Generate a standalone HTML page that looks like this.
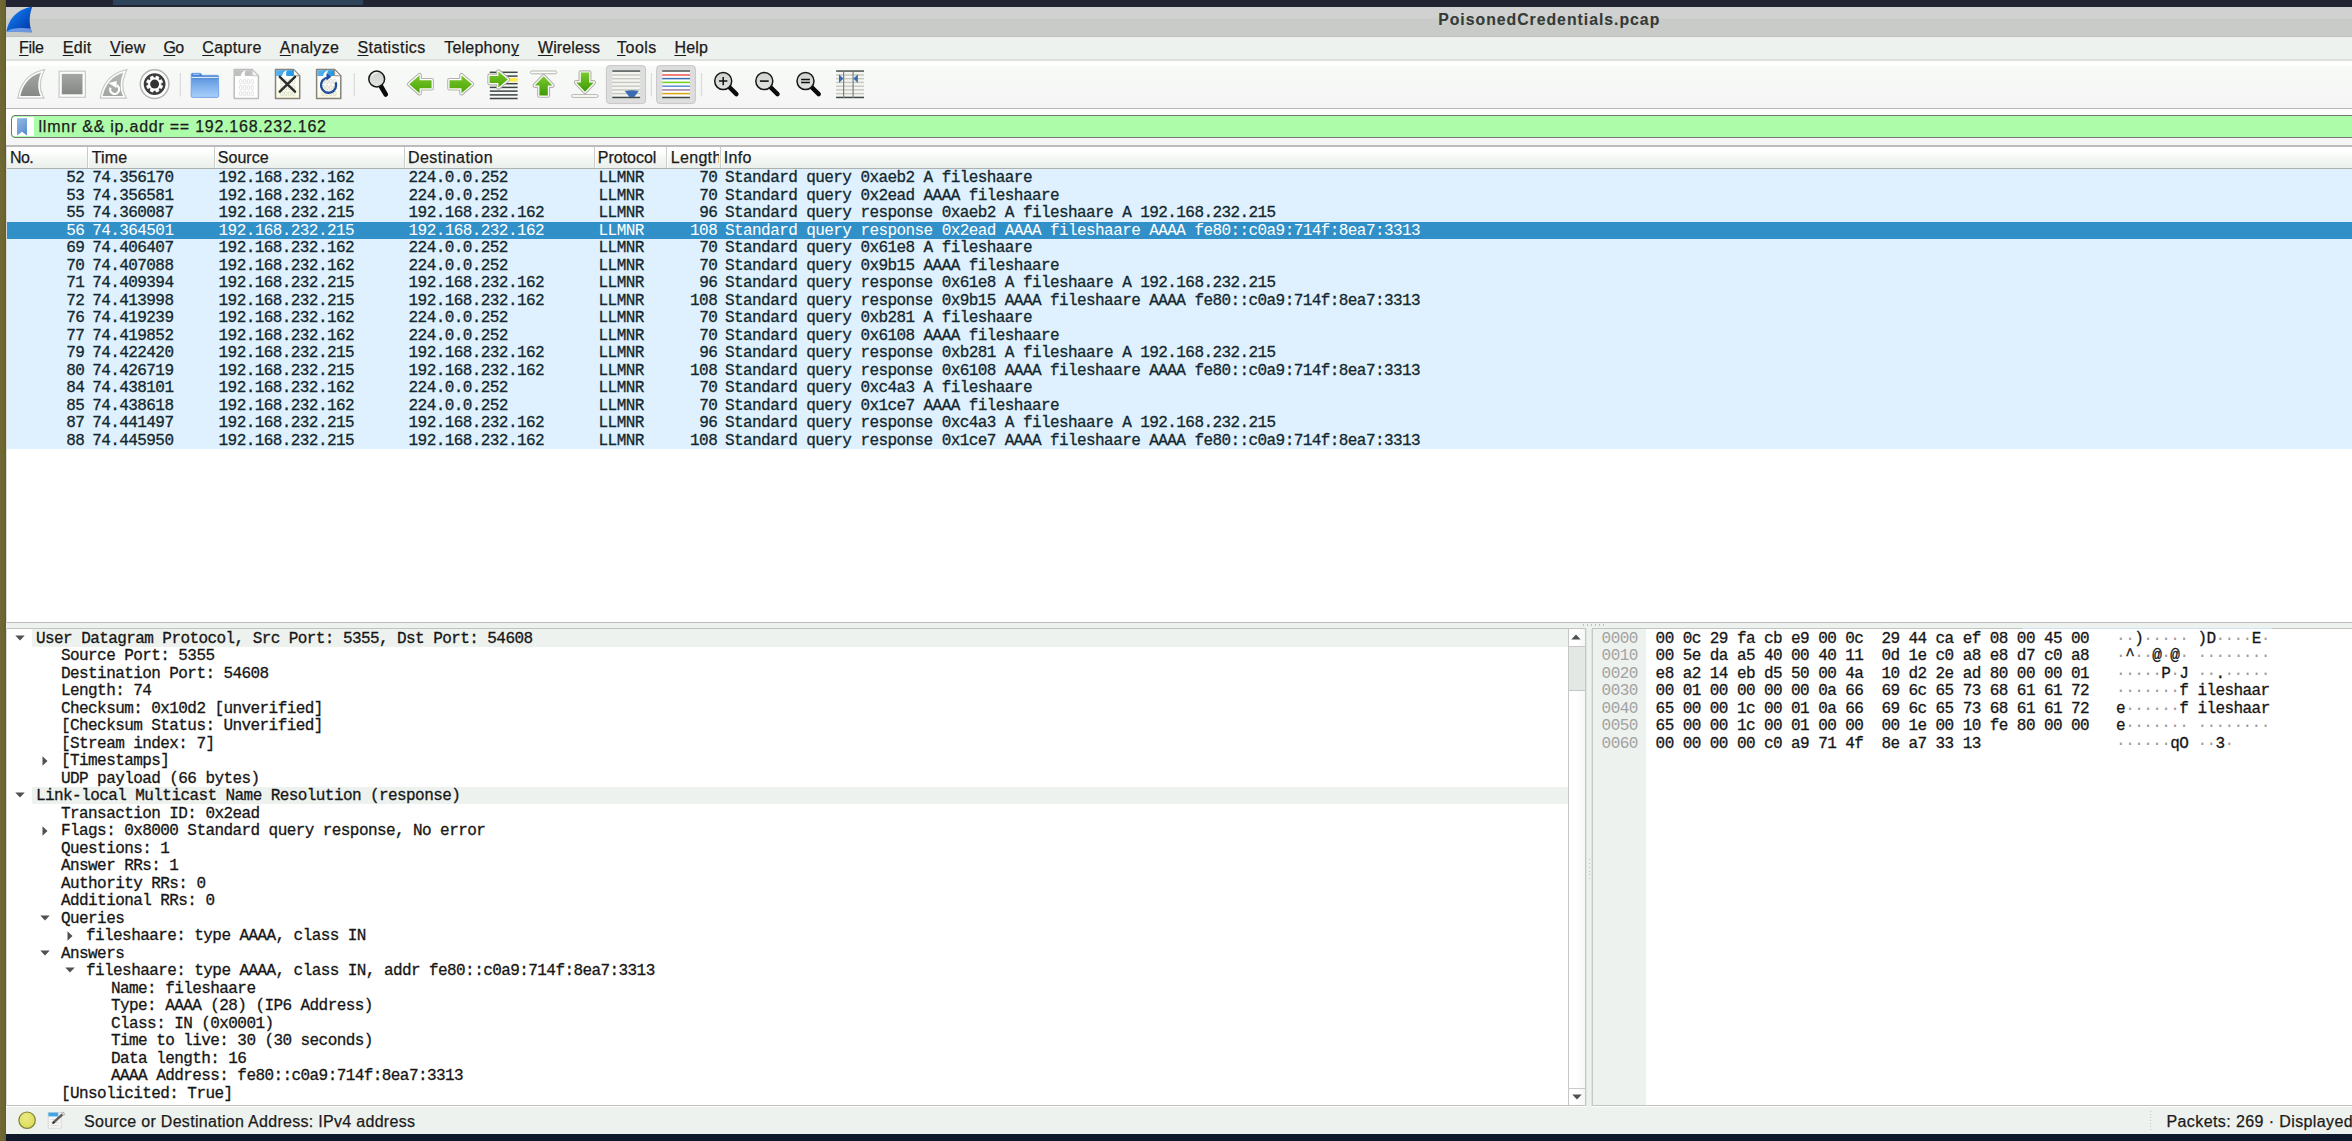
<!DOCTYPE html>
<html><head><meta charset="utf-8"><title>Wireshark</title>
<style>
html,body{margin:0;padding:0;overflow:hidden;}
html{width:2352px;height:1141px;}
body{width:2352px;height:1141px;overflow:hidden;position:relative;background:#fff;font-family:"Liberation Sans", sans-serif;}
.a{position:absolute;}
.s{position:absolute;white-space:pre;font-family:"Liberation Sans", sans-serif;font-size:16px;color:#1b1b1b;line-height:18px;height:18px;-webkit-text-stroke:0.25px currentColor;}
.s u{text-decoration:underline;text-decoration-thickness:1px;text-underline-offset:2px;}
.m{position:absolute;white-space:pre;font-family:"Liberation Mono", monospace;font-size:16px;letter-spacing:-0.575px;color:#12272e;line-height:18px;height:18px;-webkit-text-stroke:0.3px currentColor;}
.r{position:absolute;left:7px;right:0;height:17.5px;background:#dff1fe;}
.sel{background:#3190c7;}
.sel .m{color:#fff;-webkit-text-stroke:0.05px #fff;}
.hx2{letter-spacing:-0.57px;}
.t{color:#161616;}
.hx{color:#161616;}
.off{color:#a2a2a2;-webkit-text-stroke:0;}
.hx i{font-style:normal;color:#9c9c9c;-webkit-text-stroke:0;}
</style></head><body>

<div class="a" style="left:0;top:0;width:6px;height:1141px;background:linear-gradient(90deg,#716934 0,#6d6531 70%,#62592a 100%);"></div>
<div class="a" style="left:6px;top:0;right:0;height:6.5px;background:#222531;"></div>
<div class="a" style="left:113px;top:0;width:250px;height:5px;background:#2c435a;"></div>
<div class="a" style="left:6px;top:6.5px;right:0;height:30px;background:linear-gradient(180deg,#d1d1d1 0,#d1d1d1 38%,#c8cbc7 39%,#c8cbc7 100%);"></div>
<div class="a" style="left:6px;top:35.5px;right:0;height:1px;background:#bdc0bc;"></div>
<div class="a" style="left:6px;top:36.5px;right:0;height:23px;background:#eef2ee;"></div>
<div class="a" style="left:6px;top:59px;right:0;height:1.5px;background:#dde0dd;"></div>
<div class="a" style="left:6px;top:60.5px;right:0;height:48px;background:linear-gradient(180deg,#fff 0,#fff 9%,#f7faf7 11%,#f5f5f5 100%);"></div>
<div class="a" style="left:6px;top:108px;right:0;height:1px;background:#b7bab7;"></div>
<div class="a" style="left:6px;top:109px;right:0;height:36px;background:linear-gradient(180deg,#fff 0,#fff 15%,#f5f5f5 80%);"></div>
<div class="a" style="left:6px;top:144.5px;right:0;height:2px;background:#bcbcbc;"></div>
<div class="a" style="left:11px;top:115.2px;right:-6px;height:22.6px;box-sizing:border-box;border:1.4px solid #747474;border-radius:4px;background:#adfcaa;"></div>
<div class="a" style="left:12.4px;top:116.6px;width:21.9px;height:19.8px;border-radius:3px 0 0 3px;background:#fff;"></div>
<svg class="a" style="left:16px;top:117px" width="12" height="20" viewBox="0 0 12 20"><defs><linearGradient id="gbm" x1="0" y1="0" x2="0.6" y2="1"><stop offset="0" stop-color="#93b8e4"/><stop offset="1" stop-color="#5f92d2"/></linearGradient></defs><path d="M1 1.2h10v17.3l-5-3.8L1 18.5z" fill="url(#gbm)"/></svg>
<div class="a" style="left:7px;top:146.5px;right:0;height:21.5px;background:linear-gradient(180deg,#fff 0,#fff 20%,#f5f8f5 50%,#ecf0ec 100%);"></div>
<div class="a" style="left:7px;top:168px;right:0;height:1px;background:#aeb0ae;"></div>
<div class="a" style="left:86.8px;top:147px;width:1px;height:21px;background:#c9ccc9;"></div>
<div class="a" style="left:87.8px;top:147px;width:1px;height:21px;background:#fff;"></div>
<div class="a" style="left:213.5px;top:147px;width:1px;height:21px;background:#c9ccc9;"></div>
<div class="a" style="left:214.5px;top:147px;width:1px;height:21px;background:#fff;"></div>
<div class="a" style="left:404.1px;top:147px;width:1px;height:21px;background:#c9ccc9;"></div>
<div class="a" style="left:405.1px;top:147px;width:1px;height:21px;background:#fff;"></div>
<div class="a" style="left:594.2px;top:147px;width:1px;height:21px;background:#c9ccc9;"></div>
<div class="a" style="left:595.2px;top:147px;width:1px;height:21px;background:#fff;"></div>
<div class="a" style="left:666.1px;top:147px;width:1px;height:21px;background:#c9ccc9;"></div>
<div class="a" style="left:667.1px;top:147px;width:1px;height:21px;background:#fff;"></div>
<div class="a" style="left:719.7px;top:147px;width:1px;height:21px;background:#c9ccc9;"></div>
<div class="a" style="left:720.7px;top:147px;width:1px;height:21px;background:#fff;"></div>
<div class="r" style="top:169.3px">
<span class="m" style="left:59.2px;top:-0.1px">52</span><span class="m" style="left:85.2px;top:-0.1px">74.356170</span><span class="m" style="left:211.6px;top:-0.1px">192.168.232.162</span><span class="m" style="left:401.6px;top:-0.1px">224.0.0.252</span><span class="m" style="left:591.6px;top:-0.1px">LLMNR</span><span class="m" style="left:692.2px;top:-0.1px">70</span><span class="m" style="left:718.0px;top:-0.1px">Standard query 0xaeb2 A fileshaare</span>
</div>
<div class="r" style="top:186.8px">
<span class="m" style="left:59.2px;top:-0.1px">53</span><span class="m" style="left:85.2px;top:-0.1px">74.356581</span><span class="m" style="left:211.6px;top:-0.1px">192.168.232.162</span><span class="m" style="left:401.6px;top:-0.1px">224.0.0.252</span><span class="m" style="left:591.6px;top:-0.1px">LLMNR</span><span class="m" style="left:692.2px;top:-0.1px">70</span><span class="m" style="left:718.0px;top:-0.1px">Standard query 0x2ead AAAA fileshaare</span>
</div>
<div class="r" style="top:204.3px">
<span class="m" style="left:59.2px;top:-0.1px">55</span><span class="m" style="left:85.2px;top:-0.1px">74.360087</span><span class="m" style="left:211.6px;top:-0.1px">192.168.232.215</span><span class="m" style="left:401.6px;top:-0.1px">192.168.232.162</span><span class="m" style="left:591.6px;top:-0.1px">LLMNR</span><span class="m" style="left:692.2px;top:-0.1px">96</span><span class="m" style="left:718.0px;top:-0.1px">Standard query response 0xaeb2 A fileshaare A 192.168.232.215</span>
</div>
<div class="r sel" style="top:221.8px">
<span class="m" style="left:59.2px;top:-0.1px">56</span><span class="m" style="left:85.2px;top:-0.1px">74.364501</span><span class="m" style="left:211.6px;top:-0.1px">192.168.232.215</span><span class="m" style="left:401.6px;top:-0.1px">192.168.232.162</span><span class="m" style="left:591.6px;top:-0.1px">LLMNR</span><span class="m" style="left:683.1px;top:-0.1px">108</span><span class="m" style="left:718.0px;top:-0.1px">Standard query response 0x2ead AAAA fileshaare AAAA fe80::c0a9:714f:8ea7:3313</span>
</div>
<div class="r" style="top:239.3px">
<span class="m" style="left:59.2px;top:-0.1px">69</span><span class="m" style="left:85.2px;top:-0.1px">74.406407</span><span class="m" style="left:211.6px;top:-0.1px">192.168.232.162</span><span class="m" style="left:401.6px;top:-0.1px">224.0.0.252</span><span class="m" style="left:591.6px;top:-0.1px">LLMNR</span><span class="m" style="left:692.2px;top:-0.1px">70</span><span class="m" style="left:718.0px;top:-0.1px">Standard query 0x61e8 A fileshaare</span>
</div>
<div class="r" style="top:256.8px">
<span class="m" style="left:59.2px;top:-0.1px">70</span><span class="m" style="left:85.2px;top:-0.1px">74.407088</span><span class="m" style="left:211.6px;top:-0.1px">192.168.232.162</span><span class="m" style="left:401.6px;top:-0.1px">224.0.0.252</span><span class="m" style="left:591.6px;top:-0.1px">LLMNR</span><span class="m" style="left:692.2px;top:-0.1px">70</span><span class="m" style="left:718.0px;top:-0.1px">Standard query 0x9b15 AAAA fileshaare</span>
</div>
<div class="r" style="top:274.3px">
<span class="m" style="left:59.2px;top:-0.1px">71</span><span class="m" style="left:85.2px;top:-0.1px">74.409394</span><span class="m" style="left:211.6px;top:-0.1px">192.168.232.215</span><span class="m" style="left:401.6px;top:-0.1px">192.168.232.162</span><span class="m" style="left:591.6px;top:-0.1px">LLMNR</span><span class="m" style="left:692.2px;top:-0.1px">96</span><span class="m" style="left:718.0px;top:-0.1px">Standard query response 0x61e8 A fileshaare A 192.168.232.215</span>
</div>
<div class="r" style="top:291.8px">
<span class="m" style="left:59.2px;top:-0.1px">72</span><span class="m" style="left:85.2px;top:-0.1px">74.413998</span><span class="m" style="left:211.6px;top:-0.1px">192.168.232.215</span><span class="m" style="left:401.6px;top:-0.1px">192.168.232.162</span><span class="m" style="left:591.6px;top:-0.1px">LLMNR</span><span class="m" style="left:683.1px;top:-0.1px">108</span><span class="m" style="left:718.0px;top:-0.1px">Standard query response 0x9b15 AAAA fileshaare AAAA fe80::c0a9:714f:8ea7:3313</span>
</div>
<div class="r" style="top:309.3px">
<span class="m" style="left:59.2px;top:-0.1px">76</span><span class="m" style="left:85.2px;top:-0.1px">74.419239</span><span class="m" style="left:211.6px;top:-0.1px">192.168.232.162</span><span class="m" style="left:401.6px;top:-0.1px">224.0.0.252</span><span class="m" style="left:591.6px;top:-0.1px">LLMNR</span><span class="m" style="left:692.2px;top:-0.1px">70</span><span class="m" style="left:718.0px;top:-0.1px">Standard query 0xb281 A fileshaare</span>
</div>
<div class="r" style="top:326.8px">
<span class="m" style="left:59.2px;top:-0.1px">77</span><span class="m" style="left:85.2px;top:-0.1px">74.419852</span><span class="m" style="left:211.6px;top:-0.1px">192.168.232.162</span><span class="m" style="left:401.6px;top:-0.1px">224.0.0.252</span><span class="m" style="left:591.6px;top:-0.1px">LLMNR</span><span class="m" style="left:692.2px;top:-0.1px">70</span><span class="m" style="left:718.0px;top:-0.1px">Standard query 0x6108 AAAA fileshaare</span>
</div>
<div class="r" style="top:344.3px">
<span class="m" style="left:59.2px;top:-0.1px">79</span><span class="m" style="left:85.2px;top:-0.1px">74.422420</span><span class="m" style="left:211.6px;top:-0.1px">192.168.232.215</span><span class="m" style="left:401.6px;top:-0.1px">192.168.232.162</span><span class="m" style="left:591.6px;top:-0.1px">LLMNR</span><span class="m" style="left:692.2px;top:-0.1px">96</span><span class="m" style="left:718.0px;top:-0.1px">Standard query response 0xb281 A fileshaare A 192.168.232.215</span>
</div>
<div class="r" style="top:361.8px">
<span class="m" style="left:59.2px;top:-0.1px">80</span><span class="m" style="left:85.2px;top:-0.1px">74.426719</span><span class="m" style="left:211.6px;top:-0.1px">192.168.232.215</span><span class="m" style="left:401.6px;top:-0.1px">192.168.232.162</span><span class="m" style="left:591.6px;top:-0.1px">LLMNR</span><span class="m" style="left:683.1px;top:-0.1px">108</span><span class="m" style="left:718.0px;top:-0.1px">Standard query response 0x6108 AAAA fileshaare AAAA fe80::c0a9:714f:8ea7:3313</span>
</div>
<div class="r" style="top:379.3px">
<span class="m" style="left:59.2px;top:-0.1px">84</span><span class="m" style="left:85.2px;top:-0.1px">74.438101</span><span class="m" style="left:211.6px;top:-0.1px">192.168.232.162</span><span class="m" style="left:401.6px;top:-0.1px">224.0.0.252</span><span class="m" style="left:591.6px;top:-0.1px">LLMNR</span><span class="m" style="left:692.2px;top:-0.1px">70</span><span class="m" style="left:718.0px;top:-0.1px">Standard query 0xc4a3 A fileshaare</span>
</div>
<div class="r" style="top:396.8px">
<span class="m" style="left:59.2px;top:-0.1px">85</span><span class="m" style="left:85.2px;top:-0.1px">74.438618</span><span class="m" style="left:211.6px;top:-0.1px">192.168.232.162</span><span class="m" style="left:401.6px;top:-0.1px">224.0.0.252</span><span class="m" style="left:591.6px;top:-0.1px">LLMNR</span><span class="m" style="left:692.2px;top:-0.1px">70</span><span class="m" style="left:718.0px;top:-0.1px">Standard query 0x1ce7 AAAA fileshaare</span>
</div>
<div class="r" style="top:414.3px">
<span class="m" style="left:59.2px;top:-0.1px">87</span><span class="m" style="left:85.2px;top:-0.1px">74.441497</span><span class="m" style="left:211.6px;top:-0.1px">192.168.232.215</span><span class="m" style="left:401.6px;top:-0.1px">192.168.232.162</span><span class="m" style="left:591.6px;top:-0.1px">LLMNR</span><span class="m" style="left:692.2px;top:-0.1px">96</span><span class="m" style="left:718.0px;top:-0.1px">Standard query response 0xc4a3 A fileshaare A 192.168.232.215</span>
</div>
<div class="r" style="top:431.8px">
<span class="m" style="left:59.2px;top:-0.1px">88</span><span class="m" style="left:85.2px;top:-0.1px">74.445950</span><span class="m" style="left:211.6px;top:-0.1px">192.168.232.215</span><span class="m" style="left:401.6px;top:-0.1px">192.168.232.162</span><span class="m" style="left:591.6px;top:-0.1px">LLMNR</span><span class="m" style="left:683.1px;top:-0.1px">108</span><span class="m" style="left:718.0px;top:-0.1px">Standard query response 0x1ce7 AAAA fileshaare AAAA fe80::c0a9:714f:8ea7:3313</span>
</div>
<div class="a" style="left:7px;top:622px;right:0;height:1px;background:#b9bcb9;"></div>
<div class="a" style="left:6px;top:623px;right:0;height:5.5px;background:#eef2ee;"></div>
<div class="a" style="left:7px;top:628px;width:1579px;height:478px;box-sizing:border-box;border:1px solid #c1c3c1;border-left:none;background:#fff;"></div>
<div class="a" style="left:1586px;top:628.5px;width:6px;height:478px;background:#eef2ee;"></div>
<div class="a" style="left:1592px;top:628px;right:-2px;height:478px;box-sizing:border-box;border:1px solid #c1c3c1;background:#fff;"></div>
<div class="a" style="left:1593px;top:629px;width:53px;height:476px;background:#eef2ee;"></div>
<div class="a" style="left:2022px;top:627.5px;width:250px;height:1px;background:#cfe2f2;"></div>
<div class="a" style="left:6px;top:147px;width:1px;height:476px;background:#d8dbd8;"></div>
<div class="a" style="left:6px;top:628px;width:1px;height:478px;background:#d8dbd8;"></div>
<div class="a" style="left:1589px;top:859.2px;width:1.2px;height:1.2px;background:#bcbfbc;"></div>
<div class="a" style="left:1589px;top:863.0px;width:1.2px;height:1.2px;background:#bcbfbc;"></div>
<div class="a" style="left:1589px;top:866.7px;width:1.2px;height:1.2px;background:#bcbfbc;"></div>
<div class="a" style="left:1589px;top:870.5px;width:1.2px;height:1.2px;background:#bcbfbc;"></div>
<div class="a" style="left:1589px;top:874.2px;width:1.2px;height:1.2px;background:#bcbfbc;"></div>
<div class="a" style="left:1589px;top:878.0px;width:1.2px;height:1.2px;background:#bcbfbc;"></div>
<div class="a" style="left:1585px;top:629px;width:2px;height:477px;background:linear-gradient(90deg,#c6c8c6 0,#c6c8c6 50%,#dfe2df 50%,#dfe2df 100%);"></div>
<div class="a" style="left:1591px;top:629px;width:2px;height:477px;background:linear-gradient(90deg,#dfe2df 0,#dfe2df 50%,#c6c8c6 50%,#c6c8c6 100%);"></div>
<div class="a" style="left:1583.0px;top:624.4px;width:1.2px;height:1.2px;background:#bcbfbc;"></div>
<div class="a" style="left:1586.9px;top:624.4px;width:1.2px;height:1.2px;background:#bcbfbc;"></div>
<div class="a" style="left:1590.8px;top:624.4px;width:1.2px;height:1.2px;background:#bcbfbc;"></div>
<div class="a" style="left:1594.7px;top:624.4px;width:1.2px;height:1.2px;background:#bcbfbc;"></div>
<div class="a" style="left:1598.6px;top:624.4px;width:1.2px;height:1.2px;background:#bcbfbc;"></div>
<div class="a" style="left:1602.5px;top:624.4px;width:1.2px;height:1.2px;background:#bcbfbc;"></div>
<div class="a" style="left:6px;top:1106.5px;right:0;height:27.5px;background:#eef2ee;"></div>
<div class="a" style="left:6px;top:1134px;right:0;height:7px;background:#10182b;"></div>
<div class="a" style="left:32.3px;top:629.3px;width:1536.2px;height:17.5px;background:#eef2ee;"></div>
<svg class="a" style="left:14.7px;top:634.9px" width="10" height="6" viewBox="0 0 10 6"><path d="M0.3 0.5h9.4L5 5.5z" fill="#4d524f"/></svg>
<span class="m t" style="left:36.0px;top:629.9px">User Datagram Protocol, Src Port: 5355, Dst Port: 54608</span>
<span class="m t" style="left:61.0px;top:647.4px">Source Port: 5355</span>
<span class="m t" style="left:61.0px;top:664.9px">Destination Port: 54608</span>
<span class="m t" style="left:61.0px;top:682.4px">Length: 74</span>
<span class="m t" style="left:61.0px;top:699.9px">Checksum: 0x10d2 [unverified]</span>
<span class="m t" style="left:61.0px;top:717.4px">[Checksum Status: Unverified]</span>
<span class="m t" style="left:61.0px;top:734.9px">[Stream index: 7]</span>
<svg class="a" style="left:42.1px;top:755.8px" width="6" height="10" viewBox="0 0 6 10"><path d="M0.5 0.3v9.4L5.5 5z" fill="#4d524f"/></svg>
<span class="m t" style="left:61.0px;top:752.4px">[Timestamps]</span>
<span class="m t" style="left:61.0px;top:769.9px">UDP payload (66 bytes)</span>
<div class="a" style="left:32.3px;top:786.8px;width:1536.2px;height:17.5px;background:#eef2ee;"></div>
<svg class="a" style="left:14.7px;top:792.4px" width="10" height="6" viewBox="0 0 10 6"><path d="M0.3 0.5h9.4L5 5.5z" fill="#4d524f"/></svg>
<span class="m t" style="left:36.0px;top:787.4px">Link-local Multicast Name Resolution (response)</span>
<span class="m t" style="left:61.0px;top:804.9px">Transaction ID: 0x2ead</span>
<svg class="a" style="left:42.1px;top:825.8px" width="6" height="10" viewBox="0 0 6 10"><path d="M0.5 0.3v9.4L5.5 5z" fill="#4d524f"/></svg>
<span class="m t" style="left:61.0px;top:822.4px">Flags: 0x8000 Standard query response, No error</span>
<span class="m t" style="left:61.0px;top:839.9px">Questions: 1</span>
<span class="m t" style="left:61.0px;top:857.4px">Answer RRs: 1</span>
<span class="m t" style="left:61.0px;top:874.9px">Authority RRs: 0</span>
<span class="m t" style="left:61.0px;top:892.4px">Additional RRs: 0</span>
<svg class="a" style="left:39.7px;top:914.9px" width="10" height="6" viewBox="0 0 10 6"><path d="M0.3 0.5h9.4L5 5.5z" fill="#4d524f"/></svg>
<span class="m t" style="left:61.0px;top:909.9px">Queries</span>
<svg class="a" style="left:67.1px;top:930.8px" width="6" height="10" viewBox="0 0 6 10"><path d="M0.5 0.3v9.4L5.5 5z" fill="#4d524f"/></svg>
<span class="m t" style="left:86.0px;top:927.4px">fileshaare: type AAAA, class IN</span>
<svg class="a" style="left:39.7px;top:949.9px" width="10" height="6" viewBox="0 0 10 6"><path d="M0.3 0.5h9.4L5 5.5z" fill="#4d524f"/></svg>
<span class="m t" style="left:61.0px;top:944.9px">Answers</span>
<svg class="a" style="left:64.7px;top:967.4px" width="10" height="6" viewBox="0 0 10 6"><path d="M0.3 0.5h9.4L5 5.5z" fill="#4d524f"/></svg>
<span class="m t" style="left:86.0px;top:962.4px">fileshaare: type AAAA, class IN, addr fe80::c0a9:714f:8ea7:3313</span>
<span class="m t" style="left:111.0px;top:979.9px">Name: fileshaare</span>
<span class="m t" style="left:111.0px;top:997.4px">Type: AAAA (28) (IP6 Address)</span>
<span class="m t" style="left:111.0px;top:1014.9px">Class: IN (0x0001)</span>
<span class="m t" style="left:111.0px;top:1032.4px">Time to live: 30 (30 seconds)</span>
<span class="m t" style="left:111.0px;top:1049.9px">Data length: 16</span>
<span class="m t" style="left:111.0px;top:1067.4px">AAAA Address: fe80::c0a9:714f:8ea7:3313</span>
<span class="m t" style="left:61.0px;top:1084.9px">[Unsolicited: True]</span>
<div class="a" style="left:1568px;top:629px;width:1px;height:476px;background:#c4c7c4;"></div>
<div class="a" style="left:1569px;top:629px;width:16px;height:476px;background:linear-gradient(90deg,#fff 0,#fff 40%,#f5f6f5 100%);"></div>
<div class="a" style="left:1569px;top:646px;width:16px;height:45px;background:#e4e8e4;border-top:1px solid #c5c8c5;border-bottom:1px solid #c5c8c5;box-sizing:border-box;"></div>
<div class="a" style="left:1569px;top:1088px;width:16px;height:1px;background:#c9cbc9;"></div>
<svg class="a" style="left:1571.4px;top:633.6px" width="10" height="6" viewBox="0 0 10 6"><path d="M0.3 5.5h9.4L5 0.5z" fill="#4d524f"/></svg>
<svg class="a" style="left:1571.5px;top:1093.6px" width="10" height="6" viewBox="0 0 10 6"><path d="M0.3 0.5h9.4L5 5.5z" fill="#4d524f"/></svg>
<span class="m hx2 off" style="left:1601.6px;top:629.9px">0000</span>
<span class="m hx2 hx" style="left:1655.6px;top:629.9px">00 0c 29 fa cb e9 00 0c  29 44 ca ef 08 00 45 00</span>
<span class="m hx2 hx" style="left:2116.1px;top:629.9px"><i>··</i>)<i>·····</i> )D<i>····</i>E<i>·</i></span>
<span class="m hx2 off" style="left:1601.6px;top:647.4px">0010</span>
<span class="m hx2 hx" style="left:1655.6px;top:647.4px">00 5e da a5 40 00 40 11  0d 1e c0 a8 e8 d7 c0 a8</span>
<span class="m hx2 hx" style="left:2116.1px;top:647.4px"><i>·</i>^<i>··</i>@<i>·</i>@<i>·</i> <i>········</i></span>
<span class="m hx2 off" style="left:1601.6px;top:664.9px">0020</span>
<span class="m hx2 hx" style="left:1655.6px;top:664.9px">e8 a2 14 eb d5 50 00 4a  10 d2 2e ad 80 00 00 01</span>
<span class="m hx2 hx" style="left:2116.1px;top:664.9px"><i>·····</i>P<i>·</i>J <i>··</i>.<i>·····</i></span>
<span class="m hx2 off" style="left:1601.6px;top:682.4px">0030</span>
<span class="m hx2 hx" style="left:1655.6px;top:682.4px">00 01 00 00 00 00 0a 66  69 6c 65 73 68 61 61 72</span>
<span class="m hx2 hx" style="left:2116.1px;top:682.4px"><i>·······</i>f ileshaar</span>
<span class="m hx2 off" style="left:1601.6px;top:699.9px">0040</span>
<span class="m hx2 hx" style="left:1655.6px;top:699.9px">65 00 00 1c 00 01 0a 66  69 6c 65 73 68 61 61 72</span>
<span class="m hx2 hx" style="left:2116.1px;top:699.9px">e<i>······</i>f ileshaar</span>
<span class="m hx2 off" style="left:1601.6px;top:717.4px">0050</span>
<span class="m hx2 hx" style="left:1655.6px;top:717.4px">65 00 00 1c 00 01 00 00  00 1e 00 10 fe 80 00 00</span>
<span class="m hx2 hx" style="left:2116.1px;top:717.4px">e<i>·······</i> <i>········</i></span>
<span class="m hx2 off" style="left:1601.6px;top:734.9px">0060</span>
<span class="m hx2 hx" style="left:1655.6px;top:734.9px">00 00 00 00 c0 a9 71 4f  8e a7 33 13</span>
<span class="m hx2 hx" style="left:2116.1px;top:734.9px"><i>······</i>qO <i>··</i>3<i>·</i></span>
<span class="s" style="left:1438.2px;top:11.2px;letter-spacing:0.987px;font-weight:bold;color:#343a37;font-size:15.8px;-webkit-text-stroke:0.1px #343a37;">PoisonedCredentials.pcap</span>
<span class="s" style="left:19.1px;top:38.9px;letter-spacing:-0.332px;"><u>F</u>ile</span>
<span class="s" style="left:62.7px;top:38.9px;letter-spacing:0.341px;"><u>E</u>dit</span>
<span class="s" style="left:109.9px;top:38.9px;letter-spacing:0.365px;"><u>V</u>iew</span>
<span class="s" style="left:163.5px;top:38.9px;letter-spacing:-0.659px;"><u>G</u>o</span>
<span class="s" style="left:202.3px;top:38.9px;letter-spacing:0.360px;"><u>C</u>apture</span>
<span class="s" style="left:279.8px;top:38.9px;letter-spacing:0.380px;"><u>A</u>nalyze</span>
<span class="s" style="left:357.4px;top:38.9px;letter-spacing:0.432px;"><u>S</u>tatistics</span>
<span class="s" style="left:444.2px;top:38.9px;letter-spacing:0.231px;">Telephon<u>y</u></span>
<span class="s" style="left:537.9px;top:38.9px;letter-spacing:0.122px;"><u>W</u>ireless</span>
<span class="s" style="left:617.0px;top:38.9px;letter-spacing:0.485px;"><u>T</u>ools</span>
<span class="s" style="left:674.4px;top:38.9px;letter-spacing:0.226px;"><u>H</u>elp</span>
<span class="s" style="left:38.5px;top:117.9px;letter-spacing:0.764px;">llmnr &amp;&amp; ip.addr == 192.168.232.162</span>
<span class="s" style="left:10.0px;top:149.1px;letter-spacing:-0.653px;">No.</span>
<span class="s" style="left:91.8px;top:149.1px;letter-spacing:0.110px;">Time</span>
<span class="s" style="left:217.8px;top:149.1px;letter-spacing:0.019px;">Source</span>
<span class="s" style="left:407.9px;top:149.1px;letter-spacing:0.465px;">Destination</span>
<span class="s" style="left:597.8px;top:149.1px;letter-spacing:-0.015px;">Protocol</span>
<span class="s" style="left:670.7px;top:149.1px;letter-spacing:0.332px;width:48.3px;overflow:hidden;">Length</span>
<span class="s" style="left:723.8px;top:149.1px;letter-spacing:0.271px;">Info</span>
<span class="s" style="left:84.0px;top:1113.1px;letter-spacing:0.300px;">Source or Destination Address: IPv4 address</span>
<span class="s" style="left:2166.5px;top:1113.1px;letter-spacing:0.401px;">Packets: 269 · Displayed: 16</span>
<svg class="a" style="left:0;top:0" width="900" height="112" viewBox="0 0 900 112">
<defs>
<linearGradient id="gfin" x1="0" y1="0" x2="1" y2="1"><stop offset="0" stop-color="#2b8df7"/><stop offset="0.45" stop-color="#0a62d6"/><stop offset="1" stop-color="#002f9e"/></linearGradient>
<linearGradient id="ggrey" x1="0" y1="0" x2="0" y2="1"><stop offset="0" stop-color="#a3a6a3"/><stop offset="1" stop-color="#858885"/></linearGradient>
<linearGradient id="ggrey2" x1="0" y1="0" x2="0" y2="1"><stop offset="0" stop-color="#b4b7b4"/><stop offset="1" stop-color="#a2a5a2"/></linearGradient>
<linearGradient id="gfold" x1="0" y1="0" x2="0" y2="1"><stop offset="0" stop-color="#3b78c9"/><stop offset="0.35" stop-color="#6ea3e6"/><stop offset="1" stop-color="#a9cffb"/></linearGradient>
<linearGradient id="ggreen" x1="0" y1="0" x2="0" y2="1"><stop offset="0" stop-color="#79c62b"/><stop offset="1" stop-color="#4ba508"/></linearGradient>
<linearGradient id="ggreen2" x1="0" y1="0" x2="0" y2="1"><stop offset="0" stop-color="#7bc92f"/><stop offset="1" stop-color="#3f9a04"/></linearGradient>
<linearGradient id="gblueband" x1="0" y1="0" x2="1" y2="0"><stop offset="0" stop-color="#5db3ea"/><stop offset="1" stop-color="#1e96e3"/></linearGradient>
<linearGradient id="gcream" x1="0" y1="0" x2="0" y2="1"><stop offset="0.25" stop-color="#ffffff"/><stop offset="1" stop-color="#fafae2"/></linearGradient>
<linearGradient id="glens" x1="0" y1="0" x2="0" y2="1"><stop offset="0" stop-color="#cfd2cf"/><stop offset="1" stop-color="#e2e4e2"/></linearGradient>
</defs>
<path d="M6.5 31.8 C8.5 20 16 9.5 32.4 6.6 C30 13 28 22 31.9 32.3 Z" fill="url(#gfin)"/>
<path d="M6.5 31.8 C11 27.5 22 27.5 30.5 28.5 L31.9 32.3 Z" fill="#8fb4ee" opacity="0.75"/>
<path d="M20.4 96.0 C22.4 86 29.0 76 40.9 72.8 C38.4 79 36.6 88 40.6 96.0 Z" fill="none" stroke="#c4c7c4" stroke-width="5.4" stroke-linejoin="miter" stroke-miterlimit="3"/>
<path d="M20.4 96.0 C22.4 86 29.0 76 40.9 72.8 C38.4 79 36.6 88 40.6 96.0 Z" fill="#fff" stroke="#fbfcfb" stroke-width="3.2" stroke-linejoin="miter" stroke-miterlimit="3"/>
<path d="M20.4 96.0 C22.4 86 29.0 76 40.9 72.8 C38.4 79 36.6 88 40.6 96.0 Z" fill="url(#ggrey)"/>
<rect x="59.1" y="71.2" width="26.3" height="26.1" fill="#fbfcfb" stroke="#c4c7c4" stroke-width="1.1"/>
<rect x="61.8" y="73.9" width="20.7" height="20.4" fill="url(#ggrey)"/>
<path d="M102.8 96.0 C104.8 86 111.4 76 123.3 72.8 C120.8 79 119.0 88 123.0 96.0 Z" fill="none" stroke="#c4c7c4" stroke-width="5.4" stroke-linejoin="miter" stroke-miterlimit="3"/>
<path d="M102.8 96.0 C104.8 86 111.4 76 123.3 72.8 C120.8 79 119.0 88 123.0 96.0 Z" fill="#fff" stroke="#fbfcfb" stroke-width="3.2" stroke-linejoin="miter" stroke-miterlimit="3"/>
<path d="M102.8 96.0 C104.8 86 111.4 76 123.3 72.8 C120.8 79 119.0 88 123.0 96.0 Z" fill="url(#ggrey2)"/>
<path d="M116.6 85.4 A4.5 4.5 0 1 1 110.5 87.6" fill="none" stroke="#fff" stroke-width="2.3"/>
<path d="M108.5 83.0 L116.8 80.9 L116.4 88.0 Z" fill="#fff"/>
<circle cx="154.6" cy="84.1" r="14.3" fill="#fdfdfd" stroke="#b2b5b2" stroke-width="1.5"/>
<circle cx="154.6" cy="84.1" r="10.9" fill="#3b3b3b"/>
<path d="M160.75 84.92 L162.60 85.91 L161.54 88.47 L159.53 87.87 L158.37 89.03 L158.97 91.04 L156.41 92.10 L155.42 90.25 L153.78 90.25 L152.79 92.10 L150.23 91.04 L150.83 89.03 L149.67 87.87 L147.66 88.47 L146.60 85.91 L148.45 84.92 L148.45 83.28 L146.60 82.29 L147.66 79.73 L149.67 80.33 L150.83 79.17 L150.23 77.16 L152.79 76.10 L153.78 77.95 L155.42 77.95 L156.41 76.10 L158.97 77.16 L158.37 79.17 L159.53 80.33 L161.54 79.73 L162.60 82.29 L160.75 83.28 Z" fill="#fff" stroke="#fff" stroke-width="0.8" stroke-linejoin="round"/>
<circle cx="154.6" cy="84.1" r="4.5" fill="#333"/>
<rect x="179.8" y="73" width="1.2" height="23.5" fill="#d9dad9"/>
<rect x="353.7" y="73" width="1.2" height="23.5" fill="#d9dad9"/>
<rect x="650.8" y="73" width="1.2" height="23.5" fill="#d9dad9"/>
<rect x="700.9" y="73" width="1.2" height="23.5" fill="#d9dad9"/>
<path d="M192.5 73.3 h8 l1.6 2 h15.2 q1.3 0 1.3 1.3 v19.5 q0 1.3 -1.3 1.3 h-24.8 q-1.3 0 -1.3 -1.3 v-21.5 q0 -1.3 1.3 -1.3 z" fill="url(#gfold)" stroke="#6f9fe6" stroke-width="0.9"/>
<rect x="191.6" y="76.9" width="26.6" height="1" fill="#eaf2fd"/>
<rect x="193" y="74.1" width="6.5" height="0.9" fill="#a8c6ef"/>
<path d="M234.2 69.6 H252.2 L258.4 75.8 V98.4 H234.2 Z" fill="#fefefe" stroke="#bdbdbd" stroke-width="1.5" stroke-linejoin="round"/>
<path d="M234.79999999999998 70.19999999999999 H251.89999999999998 L251.89999999999998 76.0 H234.79999999999998 Z" fill="#bfbfbf"/>
<path d="M240.7 76.2 q0.6 -4.6 5.4 -6.2 q-2.2 2.4 -0.9 6.2 z" fill="#fff"/>
<path d="M252.2 69.6 V75.8 H258.4 Z" fill="#f6f6f6" stroke="#bdbdbd" stroke-width="0.9" stroke-linejoin="round"/>
<rect x="239.4" y="79.5" width="2.4" height="4.2" rx="1.1" fill="none" stroke="#dcdcdc" stroke-width="0.8"/>
<rect x="243.3" y="79.5" width="2.4" height="4.2" rx="1.1" fill="none" stroke="#dcdcdc" stroke-width="0.8"/>
<rect x="247.2" y="79.5" width="2.4" height="4.2" rx="1.1" fill="none" stroke="#dcdcdc" stroke-width="0.8"/>
<rect x="251.1" y="79.5" width="2.4" height="4.2" rx="1.1" fill="none" stroke="#dcdcdc" stroke-width="0.8"/>
<rect x="239.4" y="85.5" width="2.4" height="4.2" rx="1.1" fill="none" stroke="#dcdcdc" stroke-width="0.8"/>
<rect x="243.3" y="85.5" width="2.4" height="4.2" rx="1.1" fill="none" stroke="#dcdcdc" stroke-width="0.8"/>
<rect x="247.2" y="85.5" width="2.4" height="4.2" rx="1.1" fill="none" stroke="#dcdcdc" stroke-width="0.8"/>
<rect x="251.1" y="85.5" width="2.4" height="4.2" rx="1.1" fill="none" stroke="#dcdcdc" stroke-width="0.8"/>
<rect x="239.4" y="91.5" width="2.4" height="4.2" rx="1.1" fill="none" stroke="#dcdcdc" stroke-width="0.8"/>
<rect x="243.3" y="91.5" width="2.4" height="4.2" rx="1.1" fill="none" stroke="#dcdcdc" stroke-width="0.8"/>
<rect x="247.2" y="91.5" width="2.4" height="4.2" rx="1.1" fill="none" stroke="#dcdcdc" stroke-width="0.8"/>
<rect x="251.1" y="91.5" width="2.4" height="4.2" rx="1.1" fill="none" stroke="#dcdcdc" stroke-width="0.8"/>
<path d="M275.5 69.6 H293.5 L299.7 75.8 V98.4 H275.5 Z" fill="url(#gcream)" stroke="#85837c" stroke-width="1.5" stroke-linejoin="round"/>
<path d="M276.1 70.19999999999999 H293.2 L293.2 76.0 H276.1 Z" fill="url(#gblueband)"/>
<path d="M282.0 76.2 q0.6 -4.6 5.4 -6.2 q-2.2 2.4 -0.9 6.2 z" fill="#fff"/>
<path d="M293.5 69.6 V75.8 H299.7 Z" fill="#f6f6f6" stroke="#85837c" stroke-width="0.9" stroke-linejoin="round"/>
<rect x="280.7" y="79.5" width="2.4" height="4.2" rx="1.1" fill="none" stroke="#d3d3c4" stroke-width="0.8"/>
<rect x="284.6" y="79.5" width="2.4" height="4.2" rx="1.1" fill="none" stroke="#d3d3c4" stroke-width="0.8"/>
<rect x="288.5" y="79.5" width="2.4" height="4.2" rx="1.1" fill="none" stroke="#d3d3c4" stroke-width="0.8"/>
<rect x="292.4" y="79.5" width="2.4" height="4.2" rx="1.1" fill="none" stroke="#d3d3c4" stroke-width="0.8"/>
<rect x="280.7" y="85.5" width="2.4" height="4.2" rx="1.1" fill="none" stroke="#d3d3c4" stroke-width="0.8"/>
<rect x="284.6" y="85.5" width="2.4" height="4.2" rx="1.1" fill="none" stroke="#d3d3c4" stroke-width="0.8"/>
<rect x="288.5" y="85.5" width="2.4" height="4.2" rx="1.1" fill="none" stroke="#d3d3c4" stroke-width="0.8"/>
<rect x="292.4" y="85.5" width="2.4" height="4.2" rx="1.1" fill="none" stroke="#d3d3c4" stroke-width="0.8"/>
<rect x="280.7" y="91.5" width="2.4" height="4.2" rx="1.1" fill="none" stroke="#d3d3c4" stroke-width="0.8"/>
<rect x="284.6" y="91.5" width="2.4" height="4.2" rx="1.1" fill="none" stroke="#d3d3c4" stroke-width="0.8"/>
<rect x="288.5" y="91.5" width="2.4" height="4.2" rx="1.1" fill="none" stroke="#d3d3c4" stroke-width="0.8"/>
<rect x="292.4" y="91.5" width="2.4" height="4.2" rx="1.1" fill="none" stroke="#d3d3c4" stroke-width="0.8"/>
<path d="M279.8 76.8 L295.0 91.6 M295.0 76.8 L279.8 91.6" stroke="#2b2f2c" stroke-width="2.5" stroke-linecap="round"/>
<path d="M316.6 69.6 H334.6 L340.8 75.8 V98.4 H316.6 Z" fill="url(#gcream)" stroke="#85837c" stroke-width="1.5" stroke-linejoin="round"/>
<path d="M317.20000000000005 70.19999999999999 H334.3 L334.3 76.0 H317.20000000000005 Z" fill="url(#gblueband)"/>
<path d="M323.1 76.2 q0.6 -4.6 5.4 -6.2 q-2.2 2.4 -0.9 6.2 z" fill="#fff"/>
<path d="M334.6 69.6 V75.8 H340.8 Z" fill="#f6f6f6" stroke="#85837c" stroke-width="0.9" stroke-linejoin="round"/>
<rect x="321.8" y="79.5" width="2.4" height="4.2" rx="1.1" fill="none" stroke="#d3d3c4" stroke-width="0.8"/>
<rect x="325.7" y="79.5" width="2.4" height="4.2" rx="1.1" fill="none" stroke="#d3d3c4" stroke-width="0.8"/>
<rect x="329.6" y="79.5" width="2.4" height="4.2" rx="1.1" fill="none" stroke="#d3d3c4" stroke-width="0.8"/>
<rect x="333.5" y="79.5" width="2.4" height="4.2" rx="1.1" fill="none" stroke="#d3d3c4" stroke-width="0.8"/>
<rect x="321.8" y="85.5" width="2.4" height="4.2" rx="1.1" fill="none" stroke="#d3d3c4" stroke-width="0.8"/>
<rect x="325.7" y="85.5" width="2.4" height="4.2" rx="1.1" fill="none" stroke="#d3d3c4" stroke-width="0.8"/>
<rect x="329.6" y="85.5" width="2.4" height="4.2" rx="1.1" fill="none" stroke="#d3d3c4" stroke-width="0.8"/>
<rect x="333.5" y="85.5" width="2.4" height="4.2" rx="1.1" fill="none" stroke="#d3d3c4" stroke-width="0.8"/>
<rect x="321.8" y="91.5" width="2.4" height="4.2" rx="1.1" fill="none" stroke="#d3d3c4" stroke-width="0.8"/>
<rect x="325.7" y="91.5" width="2.4" height="4.2" rx="1.1" fill="none" stroke="#d3d3c4" stroke-width="0.8"/>
<rect x="329.6" y="91.5" width="2.4" height="4.2" rx="1.1" fill="none" stroke="#d3d3c4" stroke-width="0.8"/>
<rect x="333.5" y="91.5" width="2.4" height="4.2" rx="1.1" fill="none" stroke="#d3d3c4" stroke-width="0.8"/>
<path d="M327.6 77.6 A7.6 7.6 0 1 0 335.6 82.2" fill="none" stroke="#1f4f9d" stroke-width="2.3"/>
<path d="M326.4 73.2 L331.4 76.7 L326.6 80.6 Z" fill="#1f4f9d"/>
<path d="M380.9 86.3 L385.7 94.4" stroke="#0b0b0b" stroke-width="4.8" stroke-linecap="round"/>
<circle cx="376.7" cy="79.0" r="7.9" fill="url(#glens)" stroke="#161616" stroke-width="1.5"/>
<path d="M371.6 76.2 q2 -3.6 6.2 -3.4" fill="none" stroke="#fff" stroke-width="1.1" opacity="0.9"/>
<path d="M409.2 84.2 L419.6 75.2 V80.2 H431.6 V88.2 H419.6 V93.2 Z" fill="none" stroke="#b3b4ac" stroke-width="4.6" stroke-linejoin="round"/>
<path d="M409.2 84.2 L419.6 75.2 V80.2 H431.6 V88.2 H419.6 V93.2 Z" fill="#fff" stroke="#fff" stroke-width="2.4" stroke-linejoin="round"/>
<path d="M409.2 84.2 L419.6 75.2 V80.2 H431.6 V88.2 H419.6 V93.2 Z" fill="url(#ggreen)"/>
<path d="M471.9 84.2 L461.5 75.2 V80.2 H449.5 V88.2 H461.5 V93.2 Z" fill="none" stroke="#b3b4ac" stroke-width="4.6" stroke-linejoin="round"/>
<path d="M471.9 84.2 L461.5 75.2 V80.2 H449.5 V88.2 H461.5 V93.2 Z" fill="#fff" stroke="#fff" stroke-width="2.4" stroke-linejoin="round"/>
<path d="M471.9 84.2 L461.5 75.2 V80.2 H449.5 V88.2 H461.5 V93.2 Z" fill="url(#ggreen)"/>
<rect x="489.8" y="71.55" width="27.8" height="1.5" fill="#3d4744"/>
<rect x="489.8" y="75.35" width="27.8" height="1.5" fill="#3d4744"/>
<rect x="489.8" y="82.95" width="27.8" height="1.5" fill="#3d4744"/>
<rect x="489.8" y="86.65" width="27.8" height="1.5" fill="#3d4744"/>
<rect x="489.8" y="90.35" width="27.8" height="1.5" fill="#3d4744"/>
<rect x="489.8" y="94.15" width="27.8" height="1.5" fill="#3d4744"/>
<rect x="489.8" y="97.75" width="27.8" height="1.5" fill="#3d4744"/>
<rect x="509" y="78.0" width="8.6" height="3.6" fill="#fbe84f"/>
<path d="M507.8 79.5 L498.4 71.6 V75.9 H489.6 V83.1 H498.4 V87.4 Z" fill="none" stroke="#b3b4ac" stroke-width="4.6" stroke-linejoin="round"/>
<path d="M507.8 79.5 L498.4 71.6 V75.9 H489.6 V83.1 H498.4 V87.4 Z" fill="#fff" stroke="#fff" stroke-width="2.4" stroke-linejoin="round"/>
<path d="M507.8 79.5 L498.4 71.6 V75.9 H489.6 V83.1 H498.4 V87.4 Z" fill="url(#ggreen)"/>
<path d="M543.6 76.3 L552.4 85.6 H547.8000000000001 V95.5 H539.4 V85.6 H534.8000000000001 Z" fill="none" stroke="#b3b4ac" stroke-width="4.6" stroke-linejoin="round"/>
<path d="M543.6 76.3 L552.4 85.6 H547.8000000000001 V95.5 H539.4 V85.6 H534.8000000000001 Z" fill="#fff" stroke="#fff" stroke-width="2.4" stroke-linejoin="round"/>
<path d="M543.6 76.3 L552.4 85.6 H547.8000000000001 V95.5 H539.4 V85.6 H534.8000000000001 Z" fill="url(#ggreen2)"/>
<rect x="530.4" y="71.0" width="26.4" height="2.8" rx="1.4" fill="#fdfdfd" stroke="#b3b4ac" stroke-width="1"/>
<path d="M585.0 91.8 L593.8 82.4 H589.2 V72.6 H580.8 V82.4 H576.2 Z" fill="none" stroke="#b3b4ac" stroke-width="4.6" stroke-linejoin="round"/>
<path d="M585.0 91.8 L593.8 82.4 H589.2 V72.6 H580.8 V82.4 H576.2 Z" fill="#fff" stroke="#fff" stroke-width="2.4" stroke-linejoin="round"/>
<path d="M585.0 91.8 L593.8 82.4 H589.2 V72.6 H580.8 V82.4 H576.2 Z" fill="url(#ggreen2)"/>
<rect x="571.5" y="94.6" width="26.6" height="2.8" rx="1.4" fill="#fdfdfd" stroke="#b3b4ac" stroke-width="1"/>
<rect x="606.4" y="65.6" width="39.200000000000045" height="38" rx="3.5" fill="#dddddd" stroke="#c6c6c6" stroke-width="1"/>
<rect x="612.3" y="70.3" width="27.8" height="27.8" fill="#f4f5f3"/>
<rect x="612.3" y="74.30" width="27.8" height="1.4" fill="#c5c8bd"/>
<rect x="612.3" y="78.00" width="27.8" height="1.4" fill="#c5c8bd"/>
<rect x="612.3" y="81.70" width="27.8" height="1.4" fill="#c5c8bd"/>
<rect x="612.3" y="85.50" width="27.8" height="1.4" fill="#c5c8bd"/>
<rect x="612.3" y="89.20" width="27.8" height="1.4" fill="#c5c8bd"/>
<rect x="612.3" y="92.90" width="27.8" height="1.4" fill="#c5c8bd"/>
<rect x="612.3" y="70.3" width="27.8" height="1.5" fill="#4a5350"/>
<rect x="612.3" y="96.7" width="27.8" height="1.5" fill="#3d4744"/>
<path d="M624.8 91 Q631.8 89.6 638.8 91 L634.2 96.9 H629.4 Z" fill="#3a6cb4"/>
<rect x="656.6" y="65.6" width="38.799999999999955" height="38" rx="3.5" fill="#dddddd" stroke="#c6c6c6" stroke-width="1"/>
<rect x="662.2" y="70.3" width="27.8" height="27.8" fill="#fdfdfd"/>
<rect x="662.2" y="70.25" width="27.8" height="1.5" fill="#4a5350"/>
<rect x="662.2" y="74.25" width="27.8" height="1.5" fill="#ef5552"/>
<rect x="662.2" y="77.85" width="27.8" height="1.5" fill="#3c6db6"/>
<rect x="662.2" y="81.65" width="27.8" height="1.5" fill="#75d317"/>
<rect x="662.2" y="85.45" width="27.8" height="1.5" fill="#5c8ed0"/>
<rect x="662.2" y="89.15" width="27.8" height="1.5" fill="#a07ca4"/>
<rect x="662.2" y="92.85" width="27.8" height="1.5" fill="#d7a80e"/>
<rect x="662.2" y="96.75" width="27.8" height="1.5" fill="#3d4744"/>
<path d="M729.6 87.4 L736.4 94.1" stroke="#0b0b0b" stroke-width="4.4" stroke-linecap="round"/>
<circle cx="723.2" cy="81.1" r="8.5" fill="url(#glens)" stroke="#161616" stroke-width="1.5"/>
<path d="M719.0 81.1 H727.4000000000001 M723.2 76.89999999999999 V85.3" stroke="#111" stroke-width="1.5"/>
<path d="M770.7 87.4 L777.5 94.1" stroke="#0b0b0b" stroke-width="4.4" stroke-linecap="round"/>
<circle cx="764.3" cy="81.1" r="8.5" fill="url(#glens)" stroke="#161616" stroke-width="1.5"/>
<path d="M759.9 81.1 H768.6999999999999" stroke="#111" stroke-width="1.6"/>
<path d="M811.9 87.4 L818.7 94.1" stroke="#0b0b0b" stroke-width="4.4" stroke-linecap="round"/>
<circle cx="805.5" cy="81.1" r="8.5" fill="url(#glens)" stroke="#161616" stroke-width="1.5"/>
<path d="M801.1 79.6 H809.9 M801.1 82.6 H809.9" stroke="#111" stroke-width="1.5"/>
<rect x="836.1" y="70.3" width="27.9" height="27.8" fill="#f4f5f3"/>
<rect x="836.1" y="74.30" width="27.9" height="1.4" fill="#c5c8bd"/>
<rect x="836.1" y="78.00" width="27.9" height="1.4" fill="#c5c8bd"/>
<rect x="836.1" y="81.70" width="27.9" height="1.4" fill="#c5c8bd"/>
<rect x="836.1" y="85.50" width="27.9" height="1.4" fill="#c5c8bd"/>
<rect x="836.1" y="89.20" width="27.9" height="1.4" fill="#c5c8bd"/>
<rect x="836.1" y="92.90" width="27.9" height="1.4" fill="#c5c8bd"/>
<rect x="836.1" y="70.3" width="27.9" height="1.5" fill="#4a5350"/>
<rect x="836.1" y="96.7" width="27.9" height="1.5" fill="#3d4744"/>
<rect x="843.0" y="70.3" width="1.2" height="27.8" fill="#7d817d"/>
<rect x="852.5" y="70.3" width="1.2" height="27.8" fill="#7d817d"/>
<path d="M839 74.2 L843.4 78.6 L839 83 Z" fill="#3a6cb4"/>
<path d="M857.9 74.2 L853.4 78.6 L857.9 83 Z" fill="#3a6cb4"/>
</svg>
<svg class="a" style="left:0;top:1106px" width="80" height="30" viewBox="0 1106 80 30">
<defs><radialGradient id="gy" cx="0.4" cy="0.35" r="0.7"><stop offset="0" stop-color="#ebea85"/><stop offset="1" stop-color="#dcdb55"/></radialGradient></defs>
<circle cx="27.1" cy="1120.2" r="8.2" fill="url(#gy)" stroke="#7f8039" stroke-width="1.2"/>
<rect x="48.2" y="1112.6" width="13" height="15.6" fill="#f5f6f4" stroke="#d4d6d3" stroke-width="0.8"/>
<rect x="48.4" y="1112.6" width="9.8" height="3.8" fill="#3fa5e6"/>
<path d="M50.6 1119.5 h6 M50.6 1122.5 h8 M50.6 1125.5 h8" stroke="#d5d8d5" stroke-width="0.8"/>
<path d="M63.2 1113.6 L53.4 1122.6" stroke="#5a5d5a" stroke-width="2.6" stroke-linecap="round"/>
<path d="M53.6 1121 L52.2 1124 L55.2 1122.8 Z" fill="#333"/>
<path d="M62.2 1112.8 l1.8 1.8" stroke="#c9c9c9" stroke-width="2.4" stroke-linecap="round"/>
</svg>
<svg class="a" style="left:2149px;top:1110px" width="4" height="22" viewBox="0 0 4 22"><rect x="1.2" y="1" width="1" height="1" fill="#c2c5c2"/><rect x="1.2" y="4" width="1" height="1" fill="#c2c5c2"/><rect x="1.2" y="7" width="1" height="1" fill="#c2c5c2"/><rect x="1.2" y="10" width="1" height="1" fill="#c2c5c2"/><rect x="1.2" y="13" width="1" height="1" fill="#c2c5c2"/><rect x="1.2" y="16" width="1" height="1" fill="#c2c5c2"/><rect x="1.2" y="19" width="1" height="1" fill="#c2c5c2"/></svg>
</body></html>
